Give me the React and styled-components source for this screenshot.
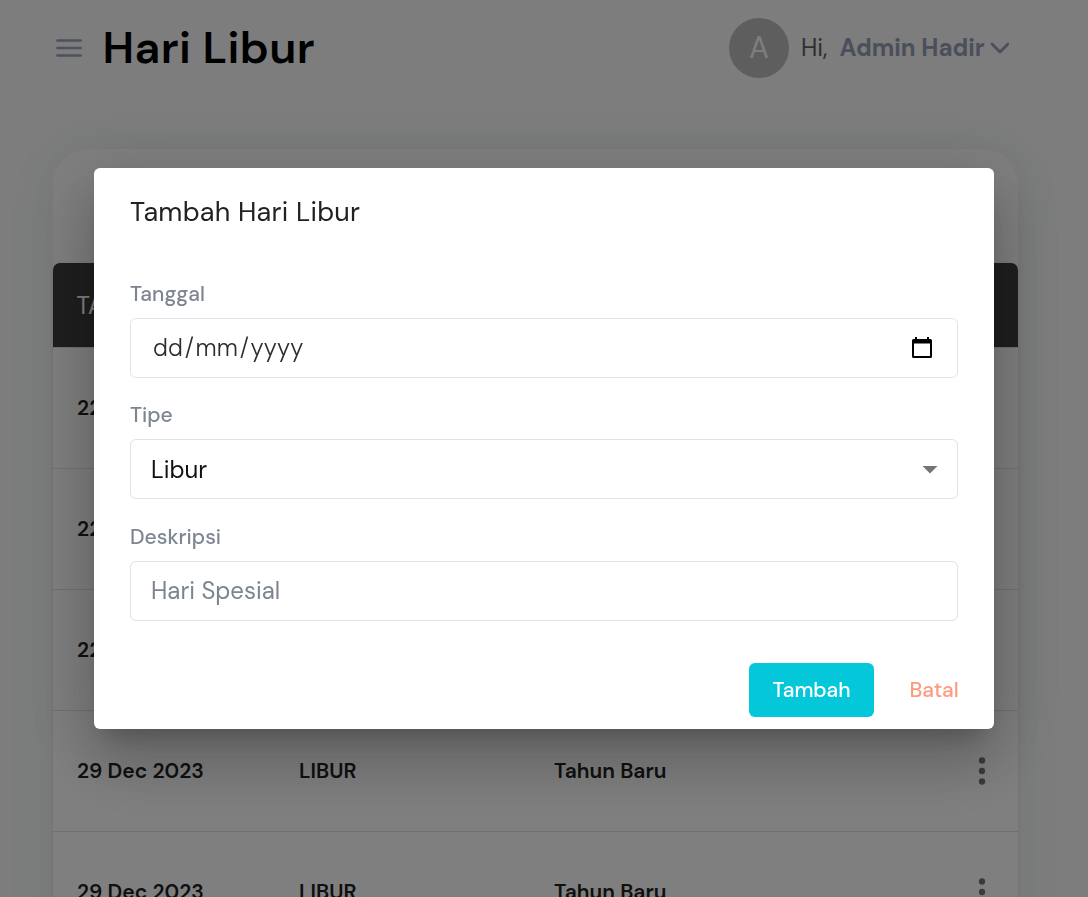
import React from "react";
import styled, { createGlobalStyle } from "styled-components";

const GlobalStyle = createGlobalStyle`
  *, *::before, *::after { box-sizing: border-box; }
  html, body { margin: 0; height: 100%; overflow: hidden; }
  body {
    background: #fafafa;
    color: #212121;
    font-family: "DM Sans", Inter, "Liberation Sans", sans-serif;
    font-optical-sizing: none;
  }
  #root { height: 100%; }
  button, input { font-family: inherit; }
`;

const Page = styled.div`
  height: 897px;
  overflow: hidden;
`;

const Header = styled.header`
  display: flex;
  align-items: center;
  height: 96px;
  padding: 0 79px 0 56px;
`;

const MenuIcon = styled.svg`
  display: block;
  width: 26px;
  height: 20px;
  margin-right: 20.5px;
  stroke: #9ba3b9;
`;

const PageTitle = styled.h1`
  margin: 0;
  flex: 1;
  color: #000;
  font-size: 45px;
  line-height: 60px;
  font-weight: 600;
  letter-spacing: 0.35px;
`;

const Profile = styled.div`
  display: flex;
  align-items: center;
  font-size: 24px;
  line-height: 36px;
`;

const Avatar = styled.div`
  display: flex;
  align-items: center;
  justify-content: center;
  width: 60px;
  height: 60px;
  margin-right: 12px;
  border-radius: 50%;
  background: #bdbdbd;
  color: #fafafa;
  font-size: 30px;
`;

const Greeting = styled.span`
  width: 38.5px;
  font-weight: 400;
  color: #5c5f66;
`;

const UserName = styled.span`
  width: 147.5px;
  white-space: nowrap;
  color: #969eb6;
  font-weight: 700;
`;

const Chevron = styled.svg`
  display: block;
  width: 22px;
  height: 18px;
  stroke: #969eb6;
`;

const Card = styled.main`
  width: 965px;
  height: 900px;
  margin: 53px 0 0 53px;
  padding-top: 114px;
  border-radius: 36px;
  background: #fff;
  box-shadow: 0 3px 60px #e9f4ee;
`;

const Table = styled.div`
  height: 786px;
  border-radius: 7px 7px 0 0;
  background: #fff;
  box-shadow: 0 3px 1.5px -1.5px rgba(0, 0, 0, 0.1),
    0 1.5px 1.5px rgba(0, 0, 0, 0.07), 0 1.5px 4.5px rgba(0, 0, 0, 0.08);
`;

const columns = "222px 255px 1fr 72px";

const TableHead = styled.div`
  display: grid;
  grid-template-columns: ${columns};
  align-items: center;
  height: 84px;
  padding-left: 23.5px;
  border-radius: 7px 7px 0 0;
  background: #3d3d3d;
  color: #fff;
  font-size: 24px;
`;

const TableRow = styled.div`
  display: grid;
  grid-template-columns: ${columns};
  align-items: center;
  height: ${(p) => (p.$first ? "122px" : "121px")};
  padding-left: 24px;
  border-bottom: 1px solid #e0e0e0;
  border-top: ${(p) => (p.$first ? "1px solid #e0e0e0" : "0")};
  color: #212121;
  font-size: 21px;
  font-weight: 600;
  letter-spacing: 0.05px;
`;

const Cell = styled.span`
  white-space: nowrap;
`;

const MoreIcon = styled.svg`
  display: block;
  width: 42px;
  height: 42px;
  margin-left: 15px;
  fill: #757575;
`;

const Backdrop = styled.div`
  position: fixed;
  inset: 0;
  display: flex;
  align-items: center;
  justify-content: center;
  background: rgba(0, 0, 0, 0.5);
`;

const Dialog = styled.section`
  width: 900px;
  height: 561px;
  border-radius: 6px;
  background: #fff;
  box-shadow: 0 16.5px 22.5px -10.5px rgba(0, 0, 0, 0.2),
    0 36px 57px 4.5px rgba(0, 0, 0, 0.14),
    0 13.5px 69px 12px rgba(0, 0, 0, 0.12);
`;

const DialogTitle = styled.h2`
  margin: 0;
  padding: 24px 36px;
  color: #212121;
  font-size: 27px;
  line-height: 40px;
  font-weight: 400;
  letter-spacing: 0.25px;
`;

const Form = styled.form`
  display: flex;
  flex-direction: column;
  gap: 21.4px;
  padding: 22px 36px 0;
`;

const Field = styled.div`
  display: flex;
  flex-direction: column;
  gap: 8px;
`;

const Label = styled.label`
  color: #7d8592;
  font-size: 21px;
  line-height: 32px;
  font-weight: 500;
`;

const Control = styled.div`
  display: flex;
  align-items: center;
  justify-content: space-between;
  height: 60px;
  padding: 0 ${(p) => (p.$date ? "25px 2px 22px" : "9px 0 20px")};
  border: 1px solid #dfe2e9;
  border-radius: 6px;
  color: ${(p) => (p.$placeholder ? "#7c858f" : p.$date ? "#2c2c2c" : "#111")};
  font-size: 24px;
  font-weight: ${(p) => (p.$date ? 300 : 400)};
`;

const DateText = styled.span`
  letter-spacing: 0.2px;
`;

const Slash = styled.span`
  margin: 0 1.5px;
`;

const CalendarIcon = styled.svg`
  display: block;
  width: 20px;
  height: 21px;
`;

const ArrowIcon = styled.svg`
  display: block;
  width: 36px;
  height: 36px;
  fill: #757575;
`;

const Actions = styled.div`
  display: flex;
  justify-content: flex-end;
  align-items: center;
  padding: 42px 36px 0;
`;

const Button = styled.button`
  display: flex;
  align-items: center;
  justify-content: center;
  height: 54px;
  padding: 0;
  border: 0;
  border-radius: 6px;
  white-space: nowrap;
  font-size: 21px;
  font-weight: 500;
  letter-spacing: -0.1px;
`;

const SubmitButton = styled(Button)`
  width: 125px;
  margin-right: 36px;
  background: #04c8d9;
  color: #fff;
`;

const CancelButton = styled(Button)`
  width: 48px;
  background: transparent;
  color: #ff9a80;
`;

const rows = [
  ["22 Dec 2023", "LIBUR", "Cuti Bersama"],
  ["22 Dec 2023", "LIBUR", "Cuti Bersama"],
  ["22 Dec 2023", "LIBUR", "Cuti Bersama"],
  ["29 Dec 2023", "LIBUR", "Tahun Baru"],
  ["29 Dec 2023", "LIBUR", "Tahun Baru"],
];

export default function App() {
  return (
    <>
      <GlobalStyle />
      <Page>
        <Header>
          <MenuIcon viewBox="0 0 26 20" fill="none" strokeWidth="2.7" strokeLinecap="round">
            <path d="M1.5 2.5h23M1.5 10h23M1.5 17.5h23" />
          </MenuIcon>
          <PageTitle>Hari Libur</PageTitle>
          <Profile>
            <Avatar>A</Avatar>
            <Greeting>Hi,</Greeting>
            <UserName>Admin Hadir</UserName>
            <Chevron viewBox="0 0 22 18" fill="none" strokeWidth="2.7" strokeLinecap="round" strokeLinejoin="round">
              <path d="M5 5l8 8 8-8" />
            </Chevron>
          </Profile>
        </Header>
        <Card>
          <Table>
            <TableHead>
              <Cell>TANGGAL</Cell>
              <Cell>TIPE</Cell>
              <Cell>DESKRIPSI</Cell>
            </TableHead>
            {rows.map(([date, type, description], i) => (
              <TableRow key={i} $first={i === 0}>
                <Cell>{date}</Cell>
                <Cell>{type}</Cell>
                <Cell>{description}</Cell>
                <MoreIcon viewBox="0 0 24 24">
                  <circle cx="12" cy="6" r="1.8" />
                  <circle cx="12" cy="12" r="1.8" />
                  <circle cx="12" cy="18" r="1.8" />
                </MoreIcon>
              </TableRow>
            ))}
          </Table>
        </Card>
      </Page>
      <Backdrop>
        <Dialog role="dialog">
          <DialogTitle>Tambah Hari Libur</DialogTitle>
          <Form>
            <Field>
              <Label>Tanggal</Label>
              <Control $date>
                <DateText>
                  dd<Slash>/</Slash>mm<Slash>/</Slash>yyyy
                </DateText>
                <CalendarIcon viewBox="0 0 20 21">
                  <path
                    fillRule="evenodd"
                    d="M3 0h2v2h10V0h2v2h1.5A1.5 1.5 0 0 1 20 3.5v16a1.5 1.5 0 0 1-1.5 1.5h-17A1.5 1.5 0 0 1 0 19.5v-16A1.5 1.5 0 0 1 1.5 2H3zM2 6.5v12.500h16V6.5z"
                  />
                </CalendarIcon>
              </Control>
            </Field>
            <Field>
              <Label>Tipe</Label>
              <Control>
                <span>Libur</span>
                <ArrowIcon viewBox="0 0 24 24">
                  <path d="M7 10l5 5 5-5z" />
                </ArrowIcon>
              </Control>
            </Field>
            <Field>
              <Label>Deskripsi</Label>
              <Control $placeholder>
                <span>Hari Spesial</span>
              </Control>
            </Field>
          </Form>
          <Actions>
            <SubmitButton type="button">Tambah</SubmitButton>
            <CancelButton type="button">Batal</CancelButton>
          </Actions>
        </Dialog>
      </Backdrop>
    </>
  );
}
